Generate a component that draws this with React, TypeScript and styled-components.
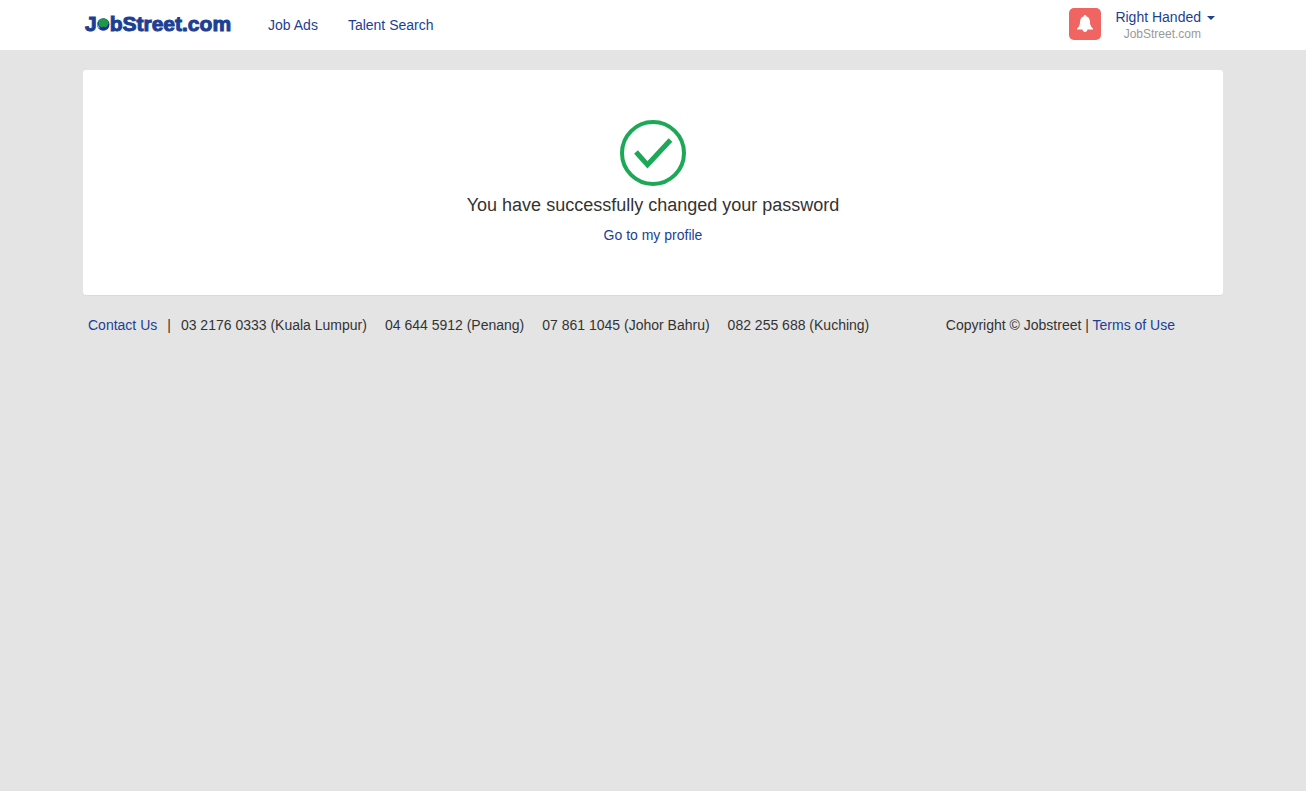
import React from "react";
import styled, { createGlobalStyle } from "styled-components";

const GlobalStyle = createGlobalStyle`
  *, *::before, *::after { box-sizing: border-box; }
  body {
    margin: 0;
    background: #e4e4e4;
    color: #333;
    font-family: "Liberation Sans", Arial, sans-serif;
    font-size: 14px;
    line-height: 20px;
  }
`;

const Container = styled.div`
  max-width: 1140px;
  margin: 0 auto;
`;

const Header = styled.header`
  background: #fff;
`;

const HeaderBar = styled(Container)`
  display: flex;
  align-items: center;
  height: 50px;
`;

const TextLink = styled.a`
  color: #1c3f94;
  text-decoration: none;
  &:hover { text-decoration: underline; }
`;

const Logo = styled.a`
  display: flex;
  align-items: center;
  margin: 0 22px 2px 2px;
  color: #1c3f94;
  font-size: 21px;
  font-weight: 700;
  line-height: 24px;
  text-decoration: none;
  -webkit-text-stroke: 1px #1c3f94;
`;

const GlobeMark = styled.svg`
  width: 13px;
  height: 14px;
  margin-top: 2px;
`;

const Nav = styled.nav`
  display: flex;
  flex: 1;
`;

const NavLink = styled(TextLink)`
  padding: 15px;
`;

const BellButton = styled.button`
  display: flex;
  align-items: center;
  justify-content: center;
  width: 32px;
  height: 32px;
  margin: 0 14px 2px 0;
  padding: 0;
  border: 0;
  border-radius: 5px;
  background: #f06461;
  cursor: pointer;
`;

const AccountButton = styled.button`
  display: flex;
  align-items: flex-start;
  gap: 6px;
  margin: 0 8px 0 0;
  padding: 0;
  border: 0;
  background: none;
  font-family: inherit;
  text-align: right;
  cursor: pointer;
`;

const AccountName = styled.span`
  display: block;
  color: #1c3f94;
  font-size: 14px;
  line-height: 18px;
`;

const AccountCompany = styled.span`
  display: block;
  color: #999;
  font-size: 12px;
  line-height: 16px;
`;

const Caret = styled.span`
  margin-top: 8px;
  border: 4px solid transparent;
  border-top-color: #1c3f94;
  border-bottom: 0;
`;

const Panel = styled.section`
  display: flex;
  flex-direction: column;
  align-items: center;
  margin: 20px 0;
  padding: 50px 20px;
  border-radius: 3px;
  background: #fff;
  box-shadow: 0 1px 0 #d9dbdb;
`;

const Message = styled.h1`
  margin: 8px 0;
  font-size: 18px;
  font-weight: 400;
  line-height: 23px;
`;

const Footer = styled.footer`
  display: flex;
  justify-content: space-between;
  padding: 0 48px 20px 5px;
`;

const Contacts = styled.div`
  display: flex;
  gap: 18px;
`;

const ContactLead = styled.span`
  display: flex;
  gap: 10px;
`;

const phones = [
  "04 644 5912 (Penang)",
  "07 861 1045 (Johor Bahru)",
  "082 255 688 (Kuching)",
];

export default function App() {
  return (
    <>
      <GlobalStyle />
      <Header>
        <HeaderBar>
          <Logo href="#" aria-label="JobStreet.com">
            <span>J</span>
            <GlobeMark viewBox="0 0 13 14" aria-hidden="true">
              <circle cx="6.3" cy="6.5" r="6.2" fill="#1a2fa4" stroke="none" />
              <path d="M1.2 3C3 .4 8 -.4 10.8 2.2L11.8 5 10.6 7.4 9 9.2 6.4 8.8 4.6 9.4 2 7.6Z" fill="#1d9a42" stroke="none" />
              <path d="M.3 5C-.1 7.6.8 9.6 2.2 11L2.6 9.2 1.4 7.4Z" fill="#8fb0c8" stroke="none" />
            </GlobeMark>
            <span>bStreet.com</span>
          </Logo>
          <Nav>
            <NavLink href="#">Job Ads</NavLink>
            <NavLink href="#">Talent Search</NavLink>
          </Nav>
          <BellButton type="button" aria-label="Notifications">
            <svg width="18" height="20" viewBox="0 0 18 20" aria-hidden="true">
              <path d="M9 1C9.8 1 10.2 1.5 10.2 2.3C12.8 3 13.8 5 13.9 7.5C14 11 15 13 17 14.5V15.6H11.5C11.3 17.2 10.4 18 9 18C7.6 18 6.7 17.2 6.5 15.6H1V14.5C3 13 4 11 4.1 7.5C4.2 5 5.2 3 7.8 2.3C7.8 1.5 8.2 1 9 1Z" fill="#fff" />
            </svg>
          </BellButton>
          <AccountButton type="button">
            <span>
              <AccountName>Right Handed</AccountName>
              <AccountCompany>JobStreet.com</AccountCompany>
            </span>
            <Caret />
          </AccountButton>
        </HeaderBar>
      </Header>
      <Container>
        <Panel>
          <svg width="66" height="66" viewBox="0 0 66 66" aria-hidden="true">
            <circle cx="33" cy="33" r="31" fill="none" stroke="#1ca857" strokeWidth="4" />
            <path d="M16 32L27.5 44.8L50.5 20" fill="none" stroke="#1ca857" strokeWidth="5" />
          </svg>
          <Message>You have successfully changed your password</Message>
          <TextLink href="#">Go to my profile</TextLink>
        </Panel>
        <Footer>
          <Contacts>
            <ContactLead>
              <TextLink href="#">Contact Us</TextLink>
              <span>|</span>
              <span>03 2176 0333 (Kuala Lumpur)</span>
            </ContactLead>
            {phones.map((phone) => (
              <span key={phone}>{phone}</span>
            ))}
          </Contacts>
          <span>
            Copyright © Jobstreet | <TextLink href="#">Terms of Use</TextLink>
          </span>
        </Footer>
      </Container>
    </>
  );
}
